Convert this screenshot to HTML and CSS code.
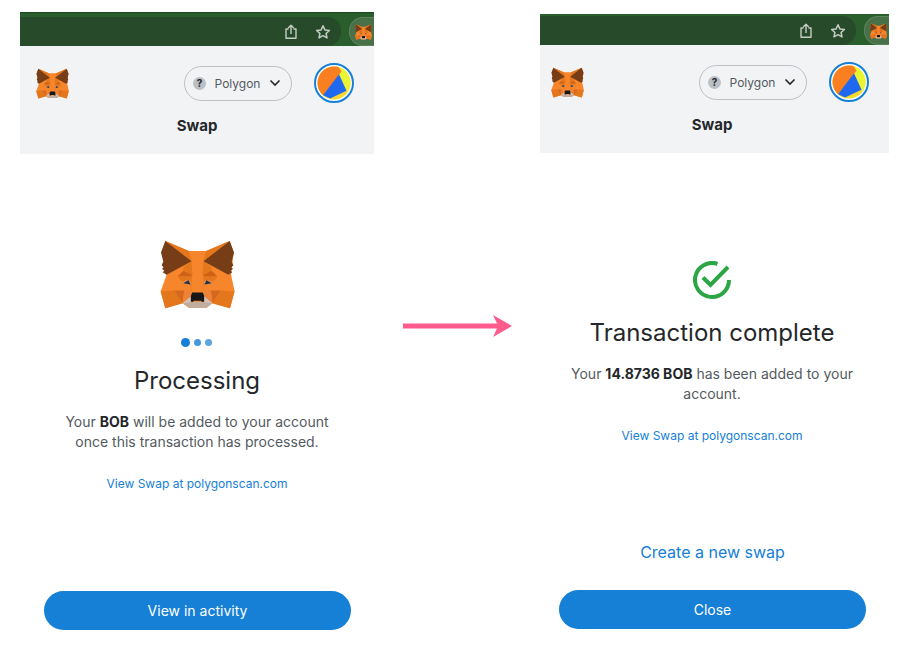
FILE: index.html
```html
<!DOCTYPE html>
<html lang="en">
<head>
<meta charset="utf-8">
<meta name="viewport" content="width=device-width, initial-scale=1">
<title>Swap</title>
<link rel="stylesheet" href="styles.css">
</head>
<body>
<svg class="sprite" aria-hidden="true">
  <symbol id="fox" viewBox="12 13 226 206">
    <path fill="#f6852b" d="M28 15l71 30h52l71-30 12 35-8 67 11 50-14 51-54-15-17 13H99l-19-13-52 15-14-51 18-50-15-67z"/>
    <path fill="#e4761b" d="M28 15l71 30 8 31zM222 15l-71 30-8 31z"/>
    <path fill="#e4761b" d="M107 76l-25 18 3 28 25-2zM143 76l25 18-3 28-25-2z"/>
    <path fill="#763d16" d="M28 15l79 61-75 41-12-8 5-4-7-6 5-4-6-7 5-11-7-27zM222 15l-79 61 75 41 12-8-5-4 7-6-5-4 6-7-5-11 7-27z"/>
    <path fill="#cd6116" d="M82 105l-17 17h43l-2-5zM168 105l17 17h-43l2-5z"/>
    <path fill="#e4761b" d="M65 122h43l-2 42-21-25-11-6zM185 122h-43l2 42 21-25 11-6z"/>
    <path fill="#f6852b" d="M65 122l-33-5 42 48h32l-2-21-30-7zM185 122l33-5-42 48h-32l2-21 30-7z"/>
    <path fill="#e4761b" d="M14 167l41-3 25 39-52 15zM236 167l-41-3-25 39 53 15z"/>
    <path fill="#d66920" d="M55 164h30l-5 39zM195 164h-30l5 39z"/>
    <path fill="#ee8236" d="M85 164h21l-1 18-25 21zM165 164h-21l1 18 25 21z"/>
    <path fill="#c0ad9e" d="M80 203l25-21 3 16h34l3-16 25 21-17 13H99z"/>
    <path fill="#d7c1b3" d="M80 203l25-21 2 17zM170 203l-25-21-2 17z"/>
    <path fill="#e48b4c" d="M74 142l18-10 12 3 3 13zM176 142l-18-10-12 3-3 13z"/>
    <path fill="#233447" d="M82 142l16-9 6 13zM168 142l-16-9-6 13z"/>
    <path fill="#161616" d="M109 170h32l4 11v17h-7l-2-3h-22l-2 3h-7V181z"/>
  </symbol>
  <symbol id="share" viewBox="0 0 16 16">
    <path fill="none" stroke="currentColor" stroke-width="1.4" stroke-linejoin="round" d="M5.500 5H3v9.300h10V5h-2.500M8 10V1.500M5.200 4L8 1.200 10.800 4"/>
  </symbol>
  <symbol id="star" viewBox="0 0 16 16">
    <path fill="none" stroke="currentColor" stroke-width="1.5" stroke-linejoin="round" d="M8 1.800l1.900 4.100 4.500.5-3.300 3.100.9 4.400L8 11.700l-4 2.200.9-4.400L1.600 6.400l4.500-.5z"/>
  </symbol>
  <symbol id="avatar" viewBox="0 0 40 40">
    <clipPath id="disc"><circle cx="20" cy="20" r="16.500"/></clipPath>
    <circle cx="20" cy="20" r="19" fill="#fff" stroke="#1580d6" stroke-width="2"/>
    <g clip-path="url(#disc)">
      <path fill="#f6d92d" d="M0 0h40v40H0z"/>
      <path fill="#e9f433" d="M22 0h18v34l-7.500-6L24 10z"/>
      <path fill="#f97f20" d="M0 0h22l5.500 8.500L9 33 0 36z"/>
      <path fill="#2168f0" d="M25 11.300l7.500 16.500L16 35.500l-7-3.200z"/>
    </g>
  </symbol>
</svg>

<main class="page">
  <section class="panel" aria-label="Swap processing">
    <div class="browser browser-edge">
      <div class="omnibox">
        <button class="tool" aria-label="Share"><svg><use href="#share"/></svg></button>
        <button class="tool" aria-label="Bookmark"><svg><use href="#star"/></svg></button>
      </div>
      <button class="extension" aria-label="Wallet extension"><svg><use href="#fox"/></svg></button>
    </div>
    <header class="header">
      <div class="header-row">
        <svg class="logo"><use href="#fox"/></svg>
        <button class="network"><span class="unknown">?</span><span>Polygon</span><svg class="chevron" viewBox="0 0 12 8"><path d="M1.500 1.500L6 6l4.500-4.500"/></svg></button>
        <button class="account" aria-label="Account"><svg><use href="#avatar"/></svg></button>
      </div>
      <h1>Swap</h1>
    </header>
    <div class="content">
      <svg class="mascot"><use href="#fox"/></svg>
      <div class="dots"><span></span><span></span><span></span></div>
      <h2>Processing</h2>
      <p>Your <strong>BOB</strong> will be added to your account once this transaction has processed.</p>
      <a class="scan" href="#">View Swap at polygonscan.com</a>
    </div>
    <footer class="footer">
      <button class="primary">View in activity</button>
    </footer>
  </section>

  <svg class="arrow" viewBox="0 0 109 22" aria-hidden="true"><path d="M0 8.500h94L90 0l19 11-19 11 4-8.500H0z"/></svg>

  <section class="panel panel-complete" aria-label="Swap complete">
    <div class="browser">
      <div class="omnibox">
        <button class="tool" aria-label="Share"><svg><use href="#share"/></svg></button>
        <button class="tool" aria-label="Bookmark"><svg><use href="#star"/></svg></button>
      </div>
      <button class="extension" aria-label="Wallet extension"><svg><use href="#fox"/></svg></button>
    </div>
    <header class="header">
      <div class="header-row">
        <svg class="logo"><use href="#fox"/></svg>
        <button class="network"><span class="unknown">?</span><span>Polygon</span><svg class="chevron" viewBox="0 0 12 8"><path d="M1.500 1.500L6 6l4.500-4.500"/></svg></button>
        <button class="account" aria-label="Account"><svg><use href="#avatar"/></svg></button>
      </div>
      <h1>Swap</h1>
    </header>
    <div class="content">
      <svg class="check" viewBox="0 0 38 38"><path d="M24.500 2.900A17 17 0 1 0 36 19M10 16.500l7.500 7.500L35 6"/></svg>
      <h2>Transaction complete</h2>
      <p>Your <strong>14.8736 BOB</strong> has been added to your account.</p>
      <a class="scan" href="#">View Swap at polygonscan.com</a>
    </div>
    <footer class="footer">
      <a class="again" href="#">Create a new swap</a>
      <button class="primary">Close</button>
    </footer>
  </section>
</main>
</body>
</html>
```
FILE: styles.css
```css
* { box-sizing: border-box; }

body {
  margin: 0;
  background: #fff;
  color: #24272a;
  font-family: Inter, "Liberation Sans", sans-serif;
}

button {
  margin: 0;
  padding: 0;
  border: 0;
  background: none;
  color: inherit;
  font: inherit;
  cursor: pointer;
}

a { color: #1580d6; text-decoration: none; }
svg { display: block; }
.sprite { position: absolute; width: 0; height: 0; }

.page {
  display: grid;
  grid-template-columns: 354fr 166fr 349fr;
  min-height: 100vh;
  padding: 12px 18px 24px 20px;
}

.panel {
  --crop: 0px;
  --bar: 34px;
  --lead: 86px;
  display: flex;
  flex-direction: column;
}

.panel-complete {
  --crop: 5px;
  --bar: 31px;
  --lead: 108px;
  margin: 2px 0 1px;
}

/* Browser toolbar */
.browser {
  display: flex;
  align-items: flex-end;
  justify-content: space-between;
  height: var(--bar);
  overflow: hidden;
  background: #2a5f2d;
  color: #c4cdc4;
}

.browser-edge { border-top: 1px solid #1d4720; }

.omnibox {
  display: flex;
  flex: 1;
  align-items: center;
  justify-content: flex-end;
  gap: 16px;
  height: 29px;
  padding-right: 10px;
  border-radius: 0 14px 14px 0;
  background: #274a2a;
}

.tool svg { width: 16px; height: 16px; }

.extension {
  display: flex;
  align-items: center;
  width: 25px;
  height: 29px;
  margin-left: 8px;
  padding-left: 5px;
  border: 1px solid #5c835e;
  border-right: 0;
  border-radius: 14px 0 0 14px;
  background: #487149;
}

.extension svg { flex: none; width: 17px; height: 16px; }

/* Wallet header */
.header {
  height: 108px;
  padding: 17px 20px 0 calc(16px - var(--crop));
  background: #f2f3f5;
}

.header-row { display: flex; align-items: center; }
.logo { width: 33px; height: 31px; }

.network {
  display: flex;
  align-items: center;
  justify-content: space-between;
  width: 108px;
  height: 35px;
  margin-left: auto;
  padding: 0 10px 0 8px;
  border: 1px solid #bbc0c5;
  border-radius: 18px;
  color: #535a61;
  font-size: 12px;
}

.unknown {
  width: 13px;
  height: 13px;
  border-radius: 50%;
  background: #bbc0c5;
  color: #24272a;
  font-size: 10px;
  font-weight: 700;
  line-height: 13px;
}

.chevron {
  width: 12px;
  height: 8px;
  fill: none;
  stroke: #24272a;
  stroke-width: 1.6;
}

.account { margin-left: 22px; }
.account svg { width: 40px; height: 40px; }

h1 {
  margin: 11px 0 0;
  padding-left: 4px;
  font-size: 15px;
  line-height: 24px;
  text-align: center;
}

/* Status */
.content {
  display: flex;
  flex-direction: column;
  align-items: center;
  padding: var(--lead) 32px 0 calc(32px - var(--crop));
  text-align: center;
}

.mascot { width: 75px; height: 69px; }

.dots {
  display: flex;
  align-items: center;
  align-self: center;
  gap: 4px;
  height: 10px;
  margin: 28px 0 16px;
  padding-right: 2px;
}

.dots span { width: 7px; height: 7px; border-radius: 50%; background: #5ba5e0; }
.dots span:first-child { width: 9px; height: 9px; background: #1580d6; }
.dots span:nth-child(2) { background: #4398dd; }

.check {
  width: 38px;
  height: 38px;
  margin-bottom: 16px;
  fill: none;
  stroke: #2ca544;
  stroke-width: 4;
}

h2 {
  margin: 0;
  font-size: 24px;
  font-weight: 400;
  line-height: 36px;
}

.content p {
  margin: 13px 0 0;
  color: #535a61;
  font-size: 14px;
  line-height: 20px;
}

.content strong { color: #24272a; }

.scan {
  margin-top: 23px;
  font-size: 12px;
  line-height: 18px;
}

/* Actions */
.footer {
  display: flex;
  flex-direction: column;
  gap: 26px;
  margin-top: auto;
  padding: 0 23px 0 calc(24px - var(--crop));
}

.again {
  font-size: 16px;
  line-height: 24px;
  text-align: center;
}

.primary {
  height: 39px;
  border-radius: 20px;
  background: #1580d6;
  color: #fff;
  font-size: 14px;
}

.arrow {
  align-self: center;
  justify-self: center;
  width: 109px;
  height: 22px;
  margin-top: 10px;
  fill: #ff5c8d;
}
```
